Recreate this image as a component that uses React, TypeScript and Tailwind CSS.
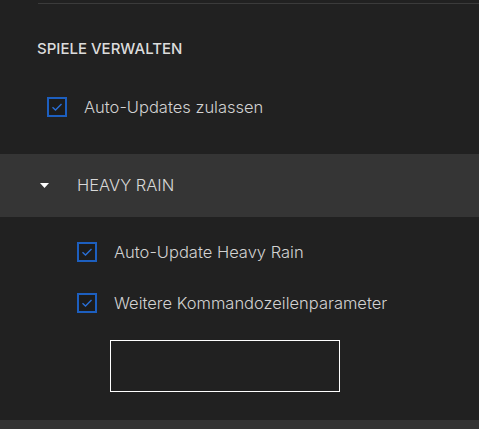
import React from 'react';

type CheckRowProps = {
  label: string;
  className?: string;
};

const CheckRow: React.FC<CheckRowProps> = ({ label, className }) => (
  <label className={`flex h-5 items-center gap-[17px] ${className ?? ''}`}>
    <span className="flex h-5 w-5 items-center justify-center border-2 border-[#1d5fbf] bg-[#1c1c1c]">
      <svg width="12" height="10" viewBox="0 0 12 10" fill="none">
        <path d="M1.5 5.2 L4.5 8 L10.5 2" stroke="#2a6fd6" strokeWidth="1.4" />
      </svg>
    </span>
    <span className="text-[16.5px] font-light leading-5 text-[#d2d2d2]">{label}</span>
  </label>
);

export default function App() {
  return (
    <div
      className="h-[429px] w-[479px] overflow-hidden bg-[#212121]"
      style={{ fontFamily: 'Inter, "Noto Sans", sans-serif' }}
    >
      <div className="ml-[38px] pt-[3px]">
        <div className="h-px bg-[#3b3b3b]" />
      </div>

      <h2 className="ml-[37px] mt-[35px] text-[15px] font-medium leading-[20px] text-[#dcdcdc]">SPIELE VERWALTEN</h2>

      <CheckRow label="Auto-Updates zulassen" className="ml-[47px] mt-[38px]" />

      <div className="mt-[37px] flex h-[63px] items-center bg-[#353535]">
        <svg className="ml-[40px]" width="9" height="5" viewBox="0 0 9 5">
          <path d="M0 0 H9 L4.5 5 Z" fill="#ffffff" />
        </svg>
        <span className="ml-[28px] text-[16.5px] font-light text-[#d8d8d8]">HEAVY RAIN</span>
      </div>

      <CheckRow label="Auto-Update Heavy Rain" className="ml-[77px] mt-[25px]" />
      <CheckRow label="Weitere Kommandozeilenparameter" className="ml-[77px] mt-[31px]" />

      <input className="ml-[110px] mt-[27px] block h-[52px] w-[230px] border border-white bg-[#212121] outline-none" />

      <div className="mt-[28px] h-[20px] bg-[#333333]" />
    </div>
  );
}
